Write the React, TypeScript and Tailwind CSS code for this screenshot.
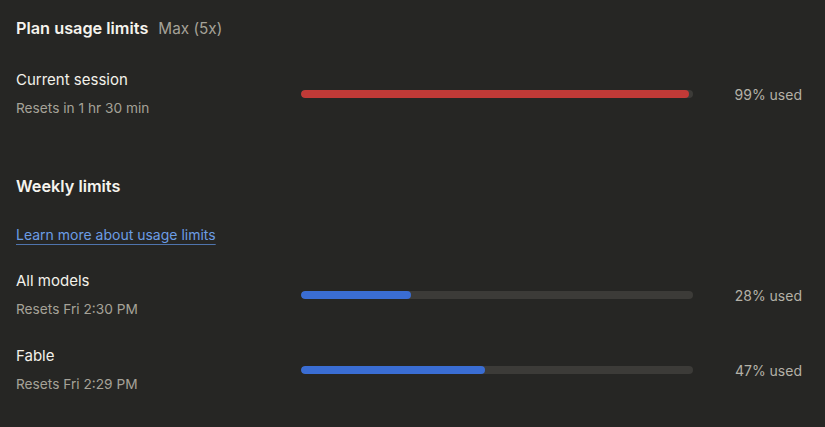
import React from "react";

type Limit = { name: string; resets: string; pct: number; color: string };

const session: Limit = { name: "Current session", resets: "Resets in 1 hr 30 min", pct: 99, color: "bg-[#c13a37]" };
const weekly: Limit[] = [
  { name: "All models", resets: "Resets Fri 2:30 PM", pct: 28, color: "bg-[#3a6dd3]" },
  { name: "Fable", resets: "Resets Fri 2:29 PM", pct: 47, color: "bg-[#3a6dd3]" },
];

function LimitRow({ item, className = "" }: { item: Limit; className?: string }) {
  return (
    <div className={`flex items-center ${className}`}>
      <div className="w-[285px] shrink-0">
        <div className="text-[15px] leading-[22px] text-[#f3f1ea]">{item.name}</div>
        <div className="mt-[6px] text-[13.7px] leading-[22px] text-[#a5a298]">{item.resets}</div>
      </div>
      <div className="w-[392px] h-[8px] rounded-full bg-[#3c3b38] overflow-hidden">
        <div className={`h-full rounded-full ${item.color}`} style={{ width: `${item.pct}%` }} />
      </div>
      <div className="flex-1 text-right text-[14px] text-[#b4b1a7]">{item.pct}% used</div>
    </div>
  );
}

export default function App() {
  return (
    <div
      className="w-[825px] h-[427px] bg-[#262624] pl-4 pr-[23px] pt-[17px]"
      style={{ fontFamily: "Inter, 'Open Sans', sans-serif" }}
    >
      <div className="flex items-baseline gap-[10px] leading-[22px]">
        <span className="text-[16.3px] font-semibold text-[#f6f4ee]">Plan usage limits</span>
        <span className="text-[15.3px] text-[#a5a298]">Max (5x)</span>
      </div>

      <LimitRow item={session} className="mt-[29px]" />

      <div className="mt-[56px] text-[16.3px] leading-[22px] font-semibold text-[#f6f4ee]">Weekly limits</div>

      <div className="mt-[26px] leading-[22px]">
        <a className="text-[14px] text-[#6c9de4] underline underline-offset-[4px] decoration-[#4f74ad]">
          Learn more about usage limits
        </a>
      </div>

      <LimitRow item={weekly[0]} className="mt-[24px]" />
      <LimitRow item={weekly[1]} className="mt-[25px]" />
    </div>
  );
}
